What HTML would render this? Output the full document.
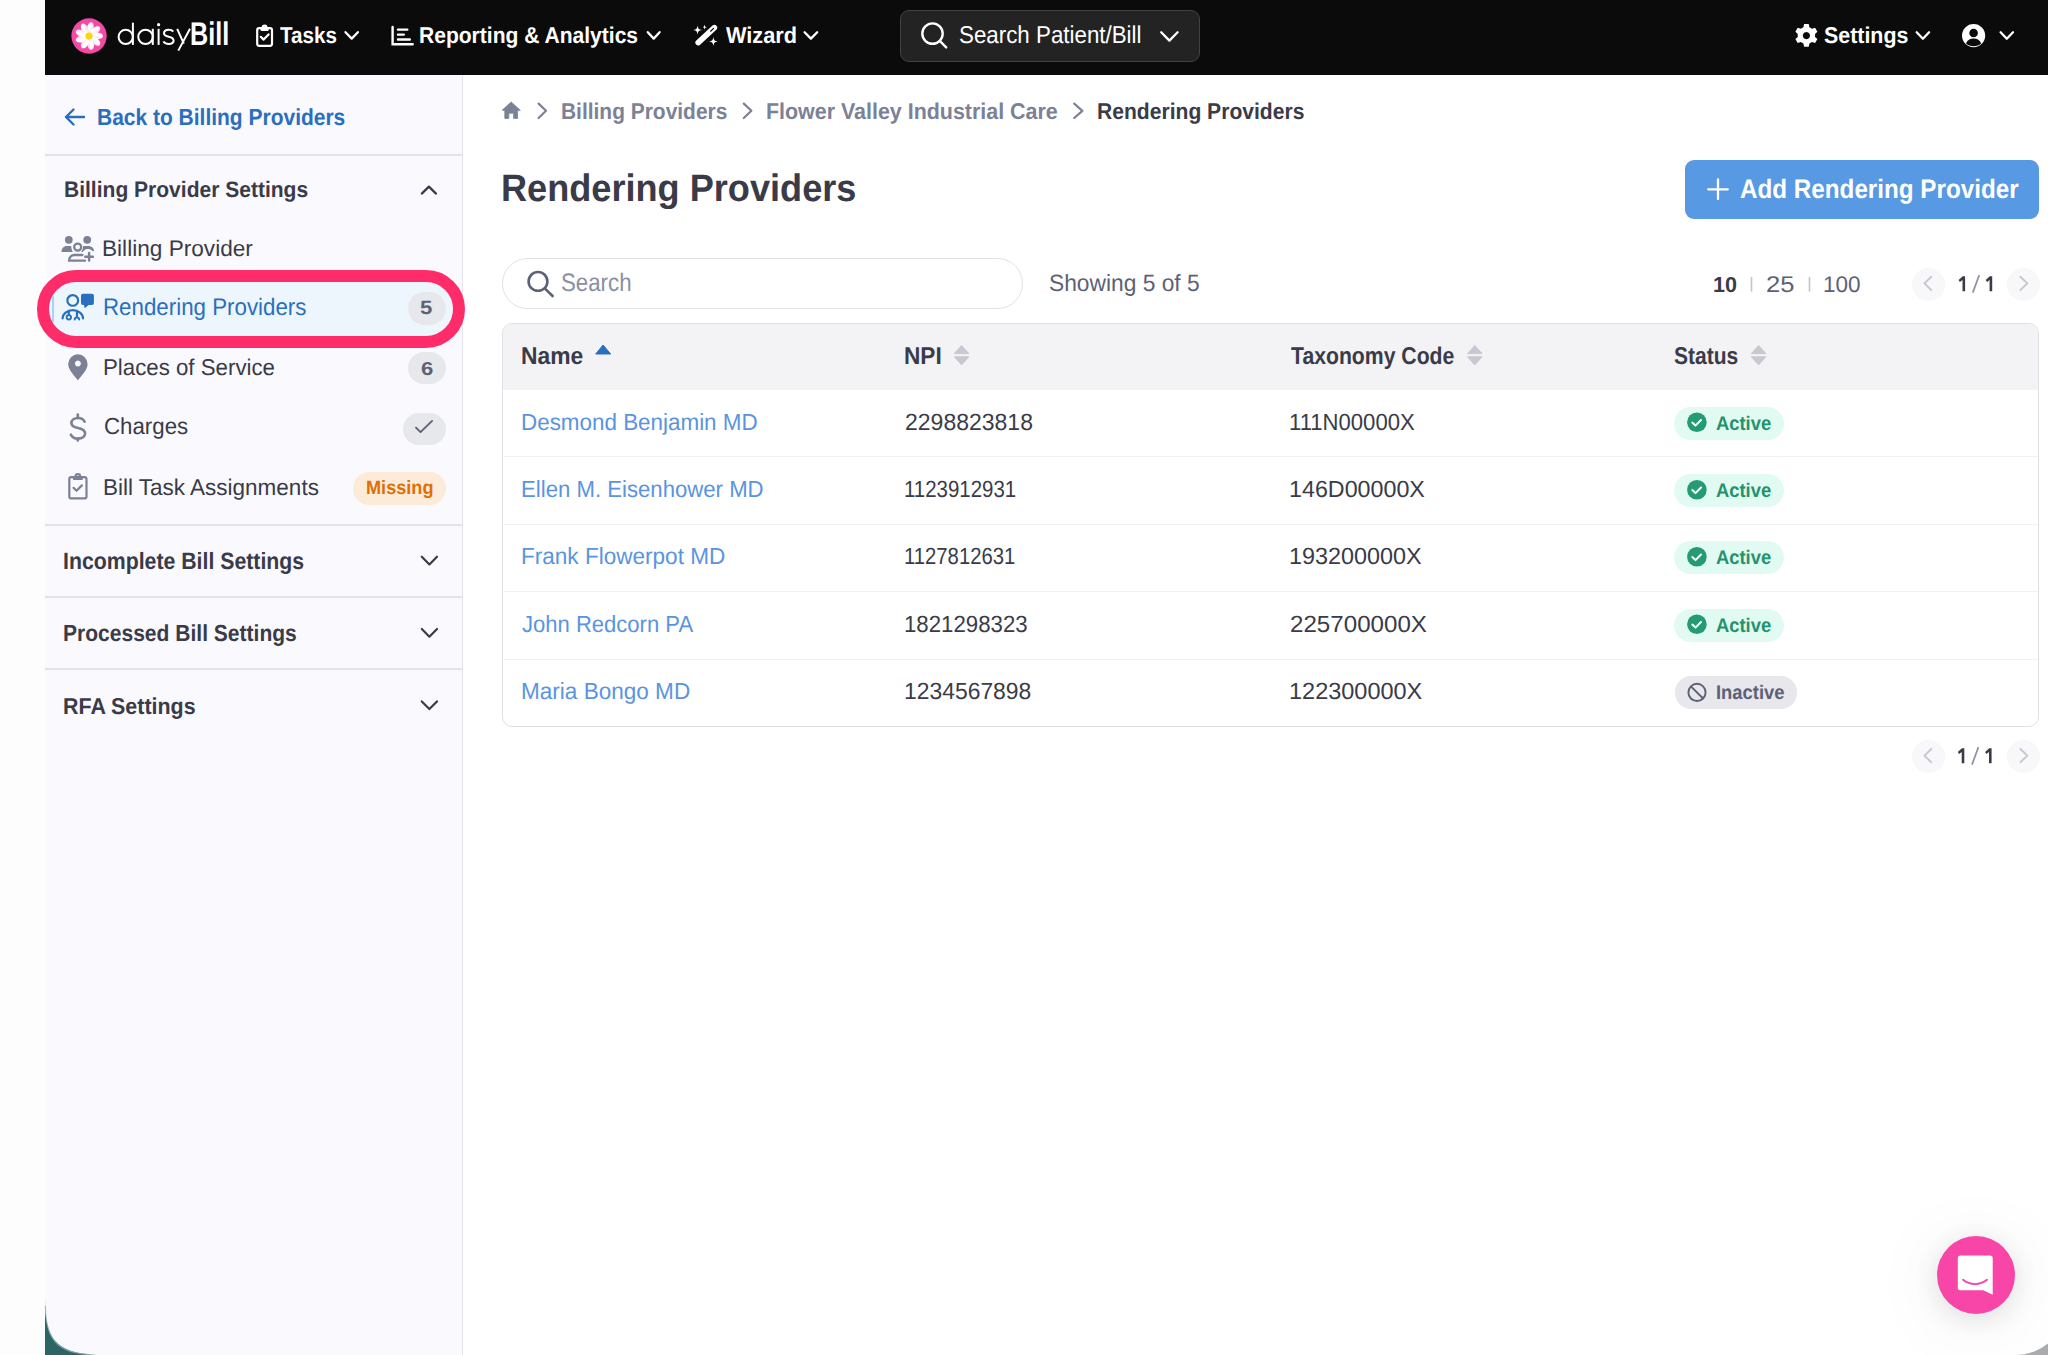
<!DOCTYPE html>
<html><head><meta charset="utf-8"><title>Rendering Providers</title>
<style>
html,body{margin:0;padding:0}
body{width:2048px;height:1355px;overflow:hidden;position:relative;background:#fdfdfd;font-family:"Liberation Sans",sans-serif}
.a{position:absolute;box-sizing:border-box}
.t{position:absolute;line-height:1;white-space:nowrap;transform-origin:0 0;font-family:"Liberation Sans",sans-serif;text-rendering:geometricPrecision}
svg{position:absolute;overflow:visible}
</style></head><body>
<!-- window corners backgrounds -->
<div class="a" style="left:1990px;top:1300px;width:58px;height:55px;background:linear-gradient(#c4c5c6 0,#c4c5c6 62%,#a9abac 62%)"></div>
<!-- window -->
<div class="a" style="left:45px;top:0;width:2023px;height:1355px;background:linear-gradient(90deg,#faf9fe 0,#faf9fe 417px,#fff 417px);border-radius:0 0 53px 0;overflow:hidden">
  <!-- sidebar -->
  <div class="a" style="left:0;top:75px;width:418px;height:1280px;background:#faf9fe;border-right:1px solid #e4e4ea"></div>
</div>
<!-- navbar -->
<div class="a" style="left:45px;top:0;width:2003px;height:75px;background:#0b0b0b"></div>
<!-- nav search box -->
<div class="a" style="left:900px;top:10px;width:300px;height:52px;background:#232323;border:1px solid #414141;border-radius:9px"></div>

<!-- sidebar separators -->
<div class="a" style="left:45px;top:154px;width:417px;height:1.5px;background:#e2e2e8"></div>
<div class="a" style="left:45px;top:524px;width:417px;height:1.5px;background:#e2e2e8"></div>
<div class="a" style="left:45px;top:596px;width:417px;height:1.5px;background:#e2e2e8"></div>
<div class="a" style="left:45px;top:668px;width:417px;height:1.5px;background:#e2e2e8"></div>

<!-- active item + ring -->
<div class="a" style="left:37px;top:270px;width:428px;height:78px;border:12.5px solid #ff2c6a;border-radius:39px;background:#eef6fd"></div>
<div class="a" style="left:51.5px;top:296px;width:2px;height:26px;background:#a9d2fa"></div>

<!-- sidebar badges -->
<div class="a" style="left:408px;top:292px;width:38px;height:33px;border-radius:16.5px;background:#e7e8ec"></div>
<div class="a" style="left:408px;top:352px;width:38px;height:32px;border-radius:16px;background:#e7e8ec"></div>
<div class="a" style="left:402.5px;top:412.5px;width:43.5px;height:32.5px;border-radius:16.25px;background:#e7e8ec"></div>
<div class="a" style="left:353px;top:472px;width:93px;height:32.5px;border-radius:16.25px;background:#fdebd9"></div>

<!-- main: button -->
<div class="a" style="left:1685px;top:160px;width:354px;height:59px;border-radius:9px;background:#5899e4"></div>
<!-- search input -->
<div class="a" style="left:502px;top:258px;width:520.5px;height:51px;border-radius:25.5px;border:1.5px solid #e1e1e7;background:#fff"></div>
<!-- pagination circles -->
<div class="a" style="left:1912px;top:267.6px;width:33px;height:33px;border-radius:50%;background:#f8f8fa"></div>
<div class="a" style="left:2006.5px;top:267.6px;width:33px;height:33px;border-radius:50%;background:#f8f8fa"></div>
<div class="a" style="left:1912px;top:739.6px;width:33px;height:33px;border-radius:50%;background:#f8f8fa"></div>
<div class="a" style="left:2006.5px;top:739.6px;width:33px;height:33px;border-radius:50%;background:#f8f8fa"></div>

<!-- table -->
<div class="a" style="left:502px;top:323px;width:1537px;height:403.5px;border:1.5px solid #e0e0e6;border-radius:10px;background:#fff;overflow:hidden">
  <div class="a" style="left:0;top:0;width:100%;height:65.5px;background:#f3f3f6"></div>
</div>
<div class="a" style="left:503.5px;top:456px;width:1534px;height:1px;background:#f0f0f3"></div>
<div class="a" style="left:503.5px;top:523.5px;width:1534px;height:1px;background:#f0f0f3"></div>
<div class="a" style="left:503.5px;top:591px;width:1534px;height:1px;background:#f0f0f3"></div>
<div class="a" style="left:503.5px;top:658.5px;width:1534px;height:1px;background:#f0f0f3"></div>
<!-- status badges -->
<div class="a" style="left:1674px;top:406.7px;width:110px;height:33px;border-radius:16.5px;background:#e1fbf3"></div>
<div class="a" style="left:1674px;top:474.2px;width:110px;height:33px;border-radius:16.5px;background:#e1fbf3"></div>
<div class="a" style="left:1674px;top:541.2px;width:110px;height:33px;border-radius:16.5px;background:#e1fbf3"></div>
<div class="a" style="left:1674px;top:608.7px;width:110px;height:33px;border-radius:16.5px;background:#e1fbf3"></div>
<div class="a" style="left:1674.5px;top:676.2px;width:122.5px;height:32.5px;border-radius:16.25px;background:#e7e7ec"></div>

<!-- chat button -->
<div class="a" style="left:1936.6px;top:1236.4px;width:78px;height:78px;border-radius:50%;background:#f745a8;box-shadow:0 5px 26px rgba(0,0,0,0.11),0 8px 80px rgba(0,0,0,0.07)"></div>

<!-- ICONS -->
<svg style="left:0;top:0" width="2048" height="1355" viewBox="0 0 2048 1355">
<!-- bottom-left window corner -->
<path d="M45 1300 C45.2 1338 55 1353 97 1355 L45 1355 Z" fill="#2d6564"/>
<path d="M45.4 1306 C45.8 1338 55.5 1352.6 90 1354.6" fill="none" stroke="#8fb0b8" stroke-width="1.1" opacity="0.8"/>
<!-- logo -->
<defs><linearGradient id="pg" x1="0" y1="0" x2="1" y2="0"><stop offset="0" stop-color="#fff"/><stop offset="0.45" stop-color="#fff"/><stop offset="1" stop-color="#fbcfe6"/></linearGradient></defs>
<circle cx="89.05" cy="36" r="17.65" fill="#f34aa5"/>
<g transform="translate(89.05 36)"><g transform="rotate(0)"><ellipse cx="1.3" cy="-8.3" rx="3.3" ry="5.6" transform="rotate(14 1.3 -8.3)" fill="url(#pg)"/></g><g transform="rotate(40)"><ellipse cx="1.3" cy="-8.3" rx="3.3" ry="5.6" transform="rotate(14 1.3 -8.3)" fill="url(#pg)"/></g><g transform="rotate(80)"><ellipse cx="1.3" cy="-8.3" rx="3.3" ry="5.6" transform="rotate(14 1.3 -8.3)" fill="url(#pg)"/></g><g transform="rotate(120)"><ellipse cx="1.3" cy="-8.3" rx="3.3" ry="5.6" transform="rotate(14 1.3 -8.3)" fill="url(#pg)"/></g><g transform="rotate(160)"><ellipse cx="1.3" cy="-8.3" rx="3.3" ry="5.6" transform="rotate(14 1.3 -8.3)" fill="url(#pg)"/></g><g transform="rotate(200)"><ellipse cx="1.3" cy="-8.3" rx="3.3" ry="5.6" transform="rotate(14 1.3 -8.3)" fill="url(#pg)"/></g><g transform="rotate(240)"><ellipse cx="1.3" cy="-8.3" rx="3.3" ry="5.6" transform="rotate(14 1.3 -8.3)" fill="url(#pg)"/></g><g transform="rotate(280)"><ellipse cx="1.3" cy="-8.3" rx="3.3" ry="5.6" transform="rotate(14 1.3 -8.3)" fill="url(#pg)"/></g><g transform="rotate(320)"><ellipse cx="1.3" cy="-8.3" rx="3.3" ry="5.6" transform="rotate(14 1.3 -8.3)" fill="url(#pg)"/></g>
  <circle r="3.5" fill="#ffd600"/>
</g>
<!-- daisy wordmark -->
<g fill="none" stroke="#fff" stroke-width="2" stroke-linecap="butt">
  <circle cx="125.7" cy="36.9" r="7.1"/>
  <path d="M132.9 22.7 V44.9"/>
  <circle cx="145.5" cy="36.9" r="7.2"/>
  <path d="M152.8 28.8 V44.9"/>
  <path d="M158.6 28.8 V44.9"/>
  <path d="M173.2 31.6 C172.2 30 170.5 29.7 168.6 29.7 C165.8 29.7 164 31.1 164 33.2 C164 35.5 166.4 36.2 168.8 36.8 C171.5 37.4 173.6 38.3 173.6 40.6 C173.6 42.8 171.6 44 168.8 44 C166.3 44 164.4 43.2 163.5 41.4"/>
  <path d="M177.2 28.8 L183.8 43.6 M190 28.8 L178.3 50.6"/>
</g>
<circle cx="158.6" cy="24.7" r="1.6" fill="#fff"/>
<!-- nav: tasks clipboard -->
<g fill="none" stroke="#fff" stroke-width="2.2" stroke-linecap="round" stroke-linejoin="round">
  <rect x="257.2" y="28.2" width="14.8" height="17.6" rx="2"/>
  <path d="M261.5 28.2 v1.6 h6.2 v-1.6 M262.7 27.5 a1.9 1.9 0 0 1 3.8 0"/>
  <path d="M260.8 36.8 l2.8 2.8 l5 -5.2"/>
</g>
<!-- nav: reporting -->
<g fill="none" stroke="#fff" stroke-width="2.4" stroke-linecap="round">
  <path d="M392.6 27 V44.3 H412.7"/>
  <path d="M398 29.6 H407.3 M398 34.6 H403.8 M398 39.5 H409.8"/>
</g>
<!-- nav: wizard wand -->
<path d="M698.2 42.6 L714.4 27.6" stroke="#fff" stroke-width="5.6" stroke-linecap="round"/>
<path d="M710.6 31.2 L713.6 28.4" stroke="#0b0b0b" stroke-width="1.2" stroke-linecap="round"/>
<g fill="#fff"><path d="M697.6 25.5 C698.41 29.19 698.41 29.19 702.1 30 C698.41 30.81 698.41 30.81 697.6 34.5 C696.7900000000001 30.81 696.7900000000001 30.81 693.1 30 C696.7900000000001 29.19 696.7900000000001 29.19 697.6 25.5 Z"/><path d="M704.6 24.400000000000002 C705.086 26.614 705.086 26.614 707.3000000000001 27.1 C705.086 27.586000000000002 705.086 27.586000000000002 704.6 29.8 C704.114 27.586000000000002 704.114 27.586000000000002 701.9 27.1 C704.114 26.614 704.114 26.614 704.6 24.400000000000002 Z"/><path d="M713.4 37.0 C714.2099999999999 40.69 714.2099999999999 40.69 717.9 41.5 C714.2099999999999 42.31 714.2099999999999 42.31 713.4 46.0 C712.59 42.31 712.59 42.31 708.9 41.5 C712.59 40.69 712.59 40.69 713.4 37.0 Z"/></g>
<!-- nav: search -->
<g fill="none" stroke="#fff" stroke-width="2.4" stroke-linecap="round">
  <circle cx="932.5" cy="33.6" r="10.2"/>
  <path d="M940 41.2 L946.2 47.4"/>
</g>
<!-- nav chevrons -->
<g fill="none" stroke="#fff" stroke-width="2.3" stroke-linecap="round" stroke-linejoin="round">
  <path d="M345.5 32.2 L351.7 38.6 L357.9 32.2"/>
  <path d="M647.8 32.2 L653.7 38.6 L659.6 32.2"/>
  <path d="M804.6 32.2 L810.9 38.6 L817.2 32.2"/>
  <path d="M1161.2 32.2 L1169.4 40.6 L1177.6 32.2"/>
  <path d="M1916.7 32.3 L1922.9 38.7 L1929.1 32.3"/>
  <path d="M2000.6 32.3 L2006.8 38.7 L2013 32.3"/>
</g>
<!-- gear -->
<g transform="translate(1806.4 35.6)" fill="#fff">
  <path d="M-2.3 -11.6 h4.6 l0.7 3.2 a8.6 8.6 0 0 1 2.6 1.5 l3.1 -1 l2.3 4 l-2.4 2.2 a8.6 8.6 0 0 1 0 3 l2.4 2.2 l-2.3 4 l-3.1 -1 a8.6 8.6 0 0 1 -2.6 1.5 l-0.7 3.2 h-4.6 l-0.7 -3.2 a8.6 8.6 0 0 1 -2.6 -1.5 l-3.1 1 l-2.3 -4 l2.4 -2.2 a8.6 8.6 0 0 1 0 -3 l-2.4 -2.2 l2.3 -4 l3.1 1 a8.6 8.6 0 0 1 2.6 -1.5 z M0 -3.6 a3.6 3.6 0 1 0 0.001 0 z" fill-rule="evenodd"/>
</g>
<!-- user circle -->
<g>
  <circle cx="1973.6" cy="35.6" r="11.6" fill="#fff"/>
  <circle cx="1973.6" cy="33" r="4.3" fill="#0b0b0b"/>
  <path d="M1966 43.6 C1967.2 40.3 1970 38.6 1973.6 38.6 C1977.2 38.6 1980 40.3 1981.2 43.6 C1979.2 45.4 1976.6 46.2 1973.6 46.2 C1970.6 46.2 1968 45.4 1966 43.6 Z" fill="#0b0b0b"/>
</g>

<!-- sidebar back arrow -->
<g fill="none" stroke="#2a6ebf" stroke-width="2.4" stroke-linecap="round" stroke-linejoin="round">
  <path d="M84 117 H66 M73.5 109.5 L66 117 L73.5 124.5"/>
</g>
<!-- chevron up / downs -->
<g fill="none" stroke="#3a3b48" stroke-width="2.2" stroke-linecap="round" stroke-linejoin="round">
  <path d="M421.8 193.6 L428.9 186.6 L436 193.6"/>
  <path d="M421.8 556.7 L429.4 564.4 L437 556.7"/>
  <path d="M421.8 629 L429.4 636.7 L437 629"/>
  <path d="M421.8 701.4 L429.4 709.1 L437 701.4"/>
</g>
<!-- billing provider users icon -->
<g fill="#7c8196">
  <circle cx="68.8" cy="239.8" r="3.9"/>
  <path d="M61.5 252.1 C61.5 248.4 63.6 245.9 67 245.9 H71.2 C71.3 248.5 71.9 250.4 73 252.1 Z"/>
  <circle cx="87.2" cy="239.8" r="3.9"/>
  <path d="M83.2 245.9 H88.6 C91.8 245.9 93.9 248.3 94 250.6 C93.6 251.3 92.9 251.6 92.4 251 C90.8 249.4 88.8 248.9 86.9 249.1 C85.4 249.3 83.9 250.6 82.6 252.1 H81.2 C82.3 250.4 83.1 248.3 83.2 245.9 Z"/>
</g>
<g fill="none" stroke="#7c8196" stroke-width="2.3" stroke-linecap="round">
  <circle cx="77.7" cy="247.1" r="3.5"/>
  <path d="M82.4 255 H74.5 C71.3 255 69.1 257.3 69.1 260.7 H85"/>
  <path d="M89.1 253 v7.6 M85.3 256.8 h7.6" stroke-width="2.5"/>
</g>
<!-- rendering providers doctor icon -->
<g fill="none" stroke="#2a6ebf" stroke-width="2.2" stroke-linecap="round">
  <circle cx="72.75" cy="300.4" r="5.35"/>
  <path d="M62.6 318.4 A10.2 8.3 0 0 1 83 318.4"/>
  <path d="M68.8 311 V315.1 M76.95 311 V317.3"/>
  <circle cx="68.8" cy="317.3" r="2.2" stroke-width="1.9"/>
  <path d="M74.7 319.6 a2.25 2.25 0 0 1 4.5 0" stroke-width="1.9"/>
</g>
<path d="M83 293.8 h8.9 a2 2 0 0 1 2 2 v7.3 a2 2 0 0 1 -2 2 h-3.2 l-4.1 3.2 l-0.6 -3.2 h-1 a2 2 0 0 1 -2 -2 v-7.3 a2 2 0 0 1 2 -2 z" fill="#2a6ebf"/>
<!-- pin -->
<path d="M77.9 354.3 a9.7 9.7 0 0 1 9.7 9.7 c0 5.8 -6 11.6 -9.7 16.3 c-3.7 -4.7 -9.7 -10.5 -9.7 -16.3 a9.7 9.7 0 0 1 9.7 -9.7 z M77.9 360.6 a3 3 0 1 0 0.001 0 z" fill="#7c8196" fill-rule="evenodd"/>
<!-- dollar -->
<g fill="none" stroke="#7c8196" stroke-width="2.7" stroke-linecap="round">
  <path d="M84.6 421.6 c-1.2 -2.3 -3.5 -3.6 -6.6 -3.6 c-4 0 -6.6 2.2 -6.6 5 c0 3 2.7 4.2 6.6 5 c4.2 0.9 7.1 2.1 7.1 5.3 c0 3.1 -2.9 5.3 -7.1 5.3 c-3.3 0 -6 -1.5 -7.1 -3.9"/>
  <path d="M77.8 414.5 v3.4 M77.8 438.5 v1.9"/>
</g>
<!-- sidebar clipboard -->
<g fill="none" stroke="#7c8196" stroke-width="2.2" stroke-linecap="round" stroke-linejoin="round">
  <rect x="69.3" y="477.2" width="17.2" height="21.2" rx="2"/>
  <path d="M74 477.2 v1.8 h7.8 v-1.8 M75.6 476.5 a2.3 2.3 0 0 1 4.6 0"/>
  <path d="M73.5 487.8 l3 3 l5.4 -5.4"/>
</g>
<!-- check in badge -->
<path d="M416 427.6 l4.5 4.5 l11.6 -11.2" fill="none" stroke="#5d6176" stroke-width="1.9" stroke-linecap="round" stroke-linejoin="round"/>

<!-- breadcrumb home -->
<path d="M511.2 102 L520.3 110.3 H517.6 V118.4 H513.6 V113.2 H508.8 V118.4 H504.8 V110.3 H502.1 Z" fill="#7c8196" stroke="#7c8196" stroke-width="0.8" stroke-linejoin="round"/>
<g fill="none" stroke="#7c8196" stroke-width="2.2" stroke-linecap="round" stroke-linejoin="round">
  <path d="M538.6 103.6 L546 110.8 L538.6 118"/>
  <path d="M743.8 103.6 L751.4 110.8 L743.8 118"/>
  <path d="M1074.2 103.6 L1082.4 110.8 L1074.2 118"/>
</g>
<!-- plus -->
<path d="M1718 179.5 v19.6 M1708.2 189.3 h19.6" stroke="#fff" stroke-width="2.3" stroke-linecap="round"/>
<!-- search input icon -->
<g fill="none" stroke="#5d6176" stroke-width="2.6" stroke-linecap="round">
  <circle cx="538" cy="281.4" r="9.4"/>
  <path d="M545 288.6 L552.6 296"/>
</g>
<!-- pipes -->
<path d="M1751.5 277 v14.5 M1809.5 277 v14.5" stroke="#c2c4cd" stroke-width="1.6"/>
<!-- slashes -->
<path d="M1979 275.8 L1973 292 M1978.2 747.8 L1972.2 764" stroke="#8f93a5" stroke-width="1.8" stroke-linecap="round"/>
<!-- page ones -->
<g fill="#3a3b48"><path d="M1965.1 276.3 V291.2 H1962.5 V280.0 L1959.8999999999999 281.9 L1958.6 280.0 L1962.6999999999998 276.3 Z"/><path d="M1992.2 276.3 V291.2 H1989.6000000000001 V280.0 L1987.0 281.9 L1985.7 280.0 L1989.8 276.3 Z"/><path d="M1964.3 748.3000000000001 V763.2 H1961.7 V752.0 L1959.1 753.9000000000001 L1957.8 752.0 L1961.8999999999999 748.3000000000001 Z"/><path d="M1991.6 748.3000000000001 V763.2 H1989.0 V752.0 L1986.3999999999999 753.9000000000001 L1985.1 752.0 L1989.1999999999998 748.3000000000001 Z"/></g>
<!-- pagination chevrons -->
<g fill="none" stroke="#c6c8d1" stroke-width="1.9" stroke-linecap="round" stroke-linejoin="round">
  <path d="M1931.3 276.8 L1924.4 283.4 L1931.3 290"/>
  <path d="M2020.4 276.8 L2027.3 283.4 L2020.4 290"/>
  <path d="M1931.3 749 L1924.4 755.6 L1931.3 762.2"/>
  <path d="M2020.4 749 L2027.3 755.6 L2020.4 762.2"/>
</g>
<!-- sort icons -->
<path d="M595.7 354 L603.1 345 L610.6 354 Z" fill="#2a6ebf" stroke="#2a6ebf" stroke-width="1" stroke-linejoin="round"/>
<g fill="#c7c8d2" stroke="#c7c8d2" stroke-width="1" stroke-linejoin="round">
  <path d="M954.3 353.6 L961.6 345.5 L968.9 353.6 Z M954.3 356.8 L961.6 364.9 L968.9 356.8 Z"/>
  <path d="M1467.5 353.6 L1474.8 345.5 L1482.1 353.6 Z M1467.5 356.8 L1474.8 364.9 L1482.1 356.8 Z"/>
  <path d="M1751.3 353.6 L1758.6 345.5 L1765.9 353.6 Z M1751.3 356.8 L1758.6 364.9 L1765.9 356.8 Z"/>
</g>
<!-- active check circles -->
<circle cx="1696.9" cy="422.2" r="9.8" fill="#249b75"/>
<path d="M1692.3 422.6 l3.2 3 l5.5 -5.6" fill="none" stroke="#fff" stroke-width="2" stroke-linecap="round" stroke-linejoin="round"/>
<circle cx="1696.9" cy="489.7" r="9.8" fill="#249b75"/>
<path d="M1692.3 490.1 l3.2 3 l5.5 -5.6" fill="none" stroke="#fff" stroke-width="2" stroke-linecap="round" stroke-linejoin="round"/>
<circle cx="1696.9" cy="556.7" r="9.8" fill="#249b75"/>
<path d="M1692.3 557.1 l3.2 3 l5.5 -5.6" fill="none" stroke="#fff" stroke-width="2" stroke-linecap="round" stroke-linejoin="round"/>
<circle cx="1696.9" cy="624.2" r="9.8" fill="#249b75"/>
<path d="M1692.3 624.6 l3.2 3 l5.5 -5.6" fill="none" stroke="#fff" stroke-width="2" stroke-linecap="round" stroke-linejoin="round"/>
<!-- inactive ban -->
<g fill="none" stroke="#5d6176" stroke-width="1.9">
  <circle cx="1697" cy="692.4" r="8.6"/>
  <path d="M1690.9 686.3 L1703.1 698.5"/>
</g>
<!-- chat icon -->
<path d="M1960.5 1255.5 h29.5 a2.7 2.7 0 0 1 2.7 2.7 v36.5 l-9.5 -4.5 h-22.7 a2.7 2.7 0 0 1 -2.7 -2.7 v-29.3 a2.7 2.7 0 0 1 2.7 -2.7 z" fill="#fff"/>
<path d="M1963 1279.8 a19 19 0 0 0 24 0" fill="none" stroke="#f745a8" stroke-width="1.8" stroke-linecap="round"/>
</svg>


<div class="t" style="left:190.26px;top:17.82px;font-size:32.7px;font-weight:700;color:#ffffff;transform:scaleX(0.7702)">Bill</div>
<div class="t" style="left:280.00px;top:24.28px;font-size:22.82px;font-weight:700;color:#ffffff;transform:scaleX(0.9032)">Tasks</div>
<div class="t" style="left:419.35px;top:24.28px;font-size:22.82px;font-weight:700;color:#ffffff;transform:scaleX(0.9226)">Reporting &amp; Analytics</div>
<div class="t" style="left:725.50px;top:24.28px;font-size:22.82px;font-weight:700;color:#ffffff;transform:scaleX(0.9521)">Wizard</div>
<div class="t" style="left:959.08px;top:23.53px;font-size:24.42px;font-weight:400;color:#ffffff;transform:scaleX(0.9152)">Search Patient/Bill</div>
<div class="t" style="left:1823.96px;top:23.98px;font-size:22.82px;font-weight:700;color:#ffffff;transform:scaleX(0.9375)">Settings</div>
<div class="t" style="left:96.80px;top:106.11px;font-size:23.26px;font-weight:700;color:#2a6ebf;transform:scaleX(0.9022)">Back to Billing Providers</div>
<div class="t" style="left:64.16px;top:179.35px;font-size:22.38px;font-weight:700;color:#3a3b48;transform:scaleX(0.9395)">Billing Provider Settings</div>
<div class="t" style="left:102.49px;top:237.53px;font-size:22.53px;font-weight:400;color:#3a3b48;transform:scaleX(1.0047)">Billing Provider</div>
<div class="t" style="left:103.04px;top:295.50px;font-size:23.98px;font-weight:400;color:#2a6ebf;transform:scaleX(0.9310)">Rendering Providers</div>
<div class="t" style="left:420.44px;top:299.15px;font-size:19.19px;font-weight:700;color:#5d6176;transform:scaleX(1.1556)">5</div>
<div class="t" style="left:102.75px;top:355.88px;font-size:22.82px;font-weight:400;color:#3a3b48;transform:scaleX(0.9757)">Places of Service</div>
<div class="t" style="left:420.52px;top:359.73px;font-size:18.75px;font-weight:700;color:#5d6176;transform:scaleX(1.1778)">6</div>
<div class="t" style="left:103.74px;top:415.21px;font-size:23.26px;font-weight:400;color:#3a3b48;transform:scaleX(0.9581)">Charges</div>
<div class="t" style="left:102.73px;top:476.18px;font-size:22.82px;font-weight:400;color:#3a3b48;transform:scaleX(0.9861)">Bill Task Assignments</div>
<div class="t" style="left:365.66px;top:479.14px;font-size:19.33px;font-weight:700;color:#de6f08;transform:scaleX(0.9386)">Missing</div>
<div class="t" style="left:63.19px;top:549.56px;font-size:23.55px;font-weight:700;color:#3a3b48;transform:scaleX(0.9034)">Incomplete Bill Settings</div>
<div class="t" style="left:63.19px;top:622.11px;font-size:23.26px;font-weight:700;color:#3a3b48;transform:scaleX(0.9047)">Processed Bill Settings</div>
<div class="t" style="left:63.13px;top:694.55px;font-size:22.97px;font-weight:700;color:#3a3b48;transform:scaleX(0.9331)">RFA Settings</div>
<div class="t" style="left:560.87px;top:100.18px;font-size:22.82px;font-weight:700;color:#7c8196;transform:scaleX(0.9174)">Billing Providers</div>
<div class="t" style="left:765.82px;top:100.18px;font-size:22.82px;font-weight:700;color:#7c8196;transform:scaleX(0.9390)">Flower Valley Industrial Care</div>
<div class="t" style="left:1097.15px;top:100.18px;font-size:22.82px;font-weight:700;color:#3a3b48;transform:scaleX(0.9243)">Rendering Providers</div>
<div class="t" style="left:501.46px;top:170.03px;font-size:38.23px;font-weight:700;color:#3a3b48;transform:scaleX(0.9454)">Rendering Providers</div>
<div class="t" style="left:1740.29px;top:175.96px;font-size:26.74px;font-weight:700;color:#ffffff;transform:scaleX(0.9062)">Add Rendering Provider</div>
<div class="t" style="left:560.72px;top:271.39px;font-size:25.29px;font-weight:400;color:#8a8fa1;transform:scaleX(0.8808)">Search</div>
<div class="t" style="left:1048.83px;top:271.96px;font-size:23.55px;font-weight:400;color:#5d6176;transform:scaleX(0.9669)">Showing 5 of 5</div>
<div class="t" style="left:1712.70px;top:273.86px;font-size:21.66px;font-weight:700;color:#3a3b48;transform:scaleX(0.9955)">10</div>
<div class="t" style="left:1766.37px;top:273.01px;font-size:22.67px;font-weight:400;color:#5d6176;transform:scaleX(1.1261)">25</div>
<div class="t" style="left:1822.91px;top:273.01px;font-size:22.67px;font-weight:400;color:#5d6176;transform:scaleX(0.9943)">100</div>
<div class="t" style="left:520.82px;top:344.55px;font-size:24.27px;font-weight:700;color:#3a3b48;transform:scaleX(0.9413)">Name</div>
<div class="t" style="left:904.44px;top:344.55px;font-size:24.27px;font-weight:700;color:#3a3b48;transform:scaleX(0.9324)">NPI</div>
<div class="t" style="left:1290.90px;top:344.55px;font-size:24.27px;font-weight:700;color:#3a3b48;transform:scaleX(0.8737)">Taxonomy Code</div>
<div class="t" style="left:1673.93px;top:344.55px;font-size:24.27px;font-weight:700;color:#3a3b48;transform:scaleX(0.8653)">Status</div>
<div class="t" style="left:521.08px;top:410.99px;font-size:23.4px;font-weight:400;color:#5a94e0;transform:scaleX(0.9582)">Desmond Benjamin MD</div>
<div class="t" style="left:905.12px;top:410.99px;font-size:23.4px;font-weight:400;color:#3a3b48;transform:scaleX(0.9836)">2298823818</div>
<div class="t" style="left:1289.01px;top:410.99px;font-size:23.4px;font-weight:400;color:#3a3b48;transform:scaleX(0.9446)">111N00000X</div>
<div class="t" style="left:1715.77px;top:414.66px;font-size:19.77px;font-weight:700;color:#23936b;transform:scaleX(0.9293)">Active</div>
<div class="t" style="left:521.11px;top:478.29px;font-size:23.4px;font-weight:400;color:#5a94e0;transform:scaleX(0.9474)">Ellen M. Eisenhower MD</div>
<div class="t" style="left:904.35px;top:478.29px;font-size:23.4px;font-weight:400;color:#3a3b48;transform:scaleX(0.8736)">1123912931</div>
<div class="t" style="left:1288.91px;top:478.29px;font-size:23.4px;font-weight:400;color:#3a3b48;transform:scaleX(0.9948)">146D00000X</div>
<div class="t" style="left:1715.77px;top:481.96px;font-size:19.77px;font-weight:700;color:#23936b;transform:scaleX(0.9293)">Active</div>
<div class="t" style="left:521.07px;top:545.09px;font-size:23.4px;font-weight:400;color:#5a94e0;transform:scaleX(0.9641)">Frank Flowerpot MD</div>
<div class="t" style="left:904.37px;top:545.09px;font-size:23.4px;font-weight:400;color:#3a3b48;transform:scaleX(0.8672)">1127812631</div>
<div class="t" style="left:1288.90px;top:545.09px;font-size:23.4px;font-weight:400;color:#3a3b48">193200000X</div>
<div class="t" style="left:1715.77px;top:548.76px;font-size:19.77px;font-weight:700;color:#23936b;transform:scaleX(0.9293)">Active</div>
<div class="t" style="left:522.06px;top:613.19px;font-size:23.4px;font-weight:400;color:#5a94e0;transform:scaleX(0.9422)">John Redcorn PA</div>
<div class="t" style="left:904.20px;top:613.19px;font-size:23.4px;font-weight:400;color:#3a3b48;transform:scaleX(0.9504)">1821298323</div>
<div class="t" style="left:1289.87px;top:613.19px;font-size:23.4px;font-weight:400;color:#3a3b48;transform:scaleX(1.0321)">225700000X</div>
<div class="t" style="left:1715.77px;top:616.86px;font-size:19.77px;font-weight:700;color:#23936b;transform:scaleX(0.9293)">Active</div>
<div class="t" style="left:521.07px;top:680.19px;font-size:23.4px;font-weight:400;color:#5a94e0;transform:scaleX(0.9640)">Maria Bongo MD</div>
<div class="t" style="left:904.14px;top:680.19px;font-size:23.4px;font-weight:400;color:#3a3b48;transform:scaleX(0.9787)">1234567898</div>
<div class="t" style="left:1288.89px;top:680.19px;font-size:23.4px;font-weight:400;color:#3a3b48;transform:scaleX(1.0046)">122300000X</div>
<div class="t" style="left:1715.97px;top:683.86px;font-size:19.77px;font-weight:700;color:#5d6176;transform:scaleX(0.9306)">Inactive</div>
</body></html>
